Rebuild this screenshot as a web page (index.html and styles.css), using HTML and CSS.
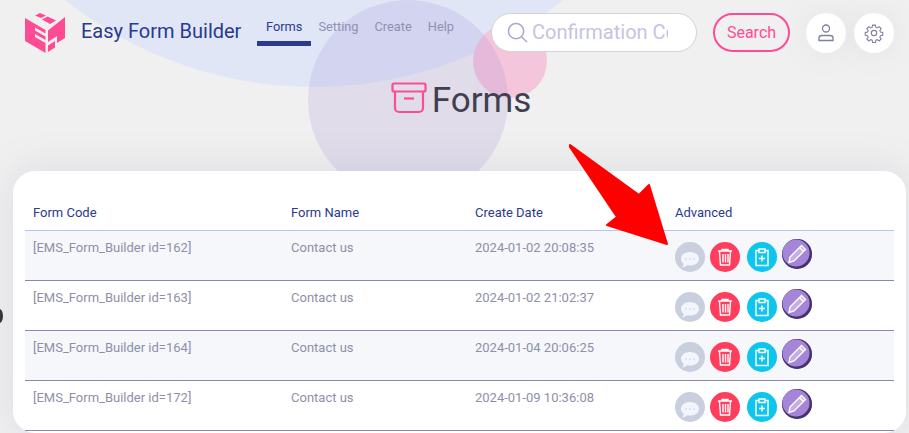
FILE: index.html
```html
<!DOCTYPE html>
<html lang="en">
<head>
  <meta charset="UTF-8" />
  <title>Easy Form Builder</title>
  <link rel="stylesheet" href="styles.css">
</head>
<body>
  <!-- Background blobs -->
  <div class="blob blob-blue"></div>
  <div class="blob blob-pink"></div>
  <div class="blob blob-purple"></div>
  <div class="blob blob-dot"></div>

  <header class="topbar">
    <svg class="logo" viewBox="0 0 42 42">
      <path d="M10 3.500 15 1 21 3.500 16 6Z M17 7.500 22.500 4.500 31 8.500 25 12Z" />
      <path d="M0 6 20.500 18V21.500L10 15.500V18.500L20.500 24.500V28L10 22V25L20.500 31V41L0 29Z" />
      <path d="M40 5V26L32 31V24L23 30V18.500Z" />
      <path d="M23 33.500 30 29V35.500L23 40Z" />
    </svg>
    <span class="brand">Easy Form Builder</span>
    <nav class="nav">
      <a class="nav-item active">Forms</a>
      <a class="nav-item">Setting</a>
      <a class="nav-item">Create</a>
      <a class="nav-item">Help</a>
    </nav>
    <div class="search-box">
      <svg class="search-icon" viewBox="0 0 22 22">
        <circle cx="9.500" cy="9.500" r="8" />
        <path d="M15 15.500 21 21" />
      </svg>
      <input class="search-input" placeholder="Confirmation Code">
    </div>
    <button class="search-btn">Search</button>
    <button class="round-btn">
      <svg viewBox="0 0 20 20">
        <circle cx="10" cy="5.500" r="3.500" />
        <path d="M3 17.500V15c0-1.500 1.500-2.500 3-2.500h8c1.500 0 3 1 3 2.500v2.500Z" />
      </svg>
    </button>
    <button class="round-btn gear">
      <svg viewBox="0 0 24 24">
        <circle cx="12" cy="12" r="3.200" />
        <path d="M10.300 2.500h3.400l.5 2.800 1.700.7 2.300-1.600 2.400 2.400-1.600 2.300.7 1.700 2.800.5v3.400l-2.800.5-.7 1.700 1.600 2.300-2.400 2.400-2.300-1.600-1.700.7-.5 2.800h-3.400l-.5-2.800-1.700-.7-2.300 1.600-2.400-2.400 1.600-2.300-.7-1.700-2.800-.5v-3.400l2.800-.5.7-1.700-1.600-2.300 2.400-2.400 2.300 1.600 1.700-.7Z" />
      </svg>
    </button>
  </header>

  <h1 class="page-title">
    <svg class="title-icon" viewBox="0 0 36 32">
      <rect x="1.500" y="1.500" width="33" height="8" rx="1.500" />
      <path d="M4 9.500V26a4 4 0 0 0 4 4h20a4 4 0 0 0 4-4V9.500" />
      <path d="M13 16.500h10" />
    </svg>
    <span>Forms</span>
  </h1>

  <main class="card">
    <table class="forms-table">
      <colgroup>
        <col class="col-code"><col class="col-name"><col class="col-date"><col>
      </colgroup>
      <thead>
        <tr><th>Form Code</th><th>Form Name</th><th>Create Date</th><th>Advanced</th></tr>
      </thead>
      <tbody>
        <tr class="odd">
          <td>[EMS_Form_Builder id=162]</td><td>Contact us</td><td>2024-01-02 20:08:35</td>
          <td>
            <div class="actions">
              <span class="act act-msg"><svg viewBox="0 0 30 30"><path class="fill" d="M15 10c5 0 9 2.800 9 6.800s-4 6.800-9 6.800c-1 0-2-.1-2.900-.3-1.300 1.300-3 2-5.100 2.200 1-1 1.600-2.300 1.700-3.800-1.700-1.200-2.700-3-2.700-4.900C6 12.800 10 10 15 10Z"/><g class="dots"><circle cx="11" cy="17" r=".8"/><circle cx="15" cy="17" r=".8"/><circle cx="19" cy="17" r=".8"/></g></svg></span>
              <span class="act act-del"><svg viewBox="0 0 30 30"><path d="M8 9h14M12 9V7.500h6V9M9.500 9.500l1 13.500h9l1-13.500M13 12v8.500M15.500 12v8.500M18 12v8.500"/></svg></span>
              <span class="act act-add"><svg viewBox="0 0 30 30"><path d="M12 8.500H9v15h12v-15h-3M12 7h6v3.500h-6ZM15 13.500v6M12 16.500h6"/></svg></span>
              <span class="act act-edit"><svg viewBox="0 0 30 30"><path class="fill" d="M19.500 6.500 23.500 10.500 12 22 7 23.500 8 18Z"/><path d="M17.500 8.500 21.500 12.500"/></svg></span>
            </div>
          </td>
        </tr>
        <tr>
          <td>[EMS_Form_Builder id=163]</td><td>Contact us</td><td>2024-01-02 21:02:37</td>
          <td>
            <div class="actions">
              <span class="act act-msg"><svg viewBox="0 0 30 30"><path class="fill" d="M15 10c5 0 9 2.800 9 6.800s-4 6.800-9 6.800c-1 0-2-.1-2.900-.3-1.300 1.300-3 2-5.100 2.200 1-1 1.600-2.300 1.700-3.800-1.700-1.200-2.700-3-2.700-4.900C6 12.800 10 10 15 10Z"/><g class="dots"><circle cx="11" cy="17" r=".8"/><circle cx="15" cy="17" r=".8"/><circle cx="19" cy="17" r=".8"/></g></svg></span>
              <span class="act act-del"><svg viewBox="0 0 30 30"><path d="M8 9h14M12 9V7.500h6V9M9.500 9.500l1 13.500h9l1-13.500M13 12v8.500M15.500 12v8.500M18 12v8.500"/></svg></span>
              <span class="act act-add"><svg viewBox="0 0 30 30"><path d="M12 8.500H9v15h12v-15h-3M12 7h6v3.500h-6ZM15 13.500v6M12 16.500h6"/></svg></span>
              <span class="act act-edit"><svg viewBox="0 0 30 30"><path class="fill" d="M19.500 6.500 23.500 10.500 12 22 7 23.500 8 18Z"/><path d="M17.500 8.500 21.500 12.500"/></svg></span>
            </div>
          </td>
        </tr>
        <tr class="odd">
          <td>[EMS_Form_Builder id=164]</td><td>Contact us</td><td>2024-01-04 20:06:25</td>
          <td>
            <div class="actions">
              <span class="act act-msg"><svg viewBox="0 0 30 30"><path class="fill" d="M15 10c5 0 9 2.800 9 6.800s-4 6.800-9 6.800c-1 0-2-.1-2.900-.3-1.300 1.300-3 2-5.100 2.200 1-1 1.600-2.300 1.700-3.800-1.700-1.200-2.700-3-2.700-4.900C6 12.800 10 10 15 10Z"/><g class="dots"><circle cx="11" cy="17" r=".8"/><circle cx="15" cy="17" r=".8"/><circle cx="19" cy="17" r=".8"/></g></svg></span>
              <span class="act act-del"><svg viewBox="0 0 30 30"><path d="M8 9h14M12 9V7.500h6V9M9.500 9.500l1 13.500h9l1-13.500M13 12v8.500M15.500 12v8.500M18 12v8.500"/></svg></span>
              <span class="act act-add"><svg viewBox="0 0 30 30"><path d="M12 8.500H9v15h12v-15h-3M12 7h6v3.500h-6ZM15 13.500v6M12 16.500h6"/></svg></span>
              <span class="act act-edit"><svg viewBox="0 0 30 30"><path class="fill" d="M19.500 6.500 23.500 10.500 12 22 7 23.500 8 18Z"/><path d="M17.500 8.500 21.500 12.500"/></svg></span>
            </div>
          </td>
        </tr>
        <tr>
          <td>[EMS_Form_Builder id=172]</td><td>Contact us</td><td>2024-01-09 10:36:08</td>
          <td>
            <div class="actions">
              <span class="act act-msg"><svg viewBox="0 0 30 30"><path class="fill" d="M15 10c5 0 9 2.800 9 6.800s-4 6.800-9 6.800c-1 0-2-.1-2.900-.3-1.300 1.300-3 2-5.100 2.200 1-1 1.600-2.300 1.700-3.800-1.700-1.200-2.700-3-2.700-4.900C6 12.800 10 10 15 10Z"/><g class="dots"><circle cx="11" cy="17" r=".8"/><circle cx="15" cy="17" r=".8"/><circle cx="19" cy="17" r=".8"/></g></svg></span>
              <span class="act act-del"><svg viewBox="0 0 30 30"><path d="M8 9h14M12 9V7.500h6V9M9.500 9.500l1 13.500h9l1-13.500M13 12v8.500M15.500 12v8.500M18 12v8.500"/></svg></span>
              <span class="act act-add"><svg viewBox="0 0 30 30"><path d="M12 8.500H9v15h12v-15h-3M12 7h6v3.500h-6ZM15 13.500v6M12 16.500h6"/></svg></span>
              <span class="act act-edit"><svg viewBox="0 0 30 30"><path class="fill" d="M19.500 6.500 23.500 10.500 12 22 7 23.500 8 18Z"/><path d="M17.500 8.500 21.500 12.500"/></svg></span>
            </div>
          </td>
        </tr>
      </tbody>
    </table>
  </main>

  <!-- Annotation arrow over the first row -->
  <svg class="arrow" viewBox="0 0 110 110">
    <path d="M2 3 71 53 81 43 99 102 39 83 49 75 2 5Z" />
  </svg>
</body>
</html>
```

FILE: styles.css
```css
*, *::before, *::after {
  box-sizing: border-box;
}

html, body {
  height: 100%;
}

body {
  margin: 0;
  padding-top: 13px;
  position: relative;
  overflow: hidden;
  background-color: #f0f0f0;
  font-family: 'Roboto', 'Liberation Sans', sans-serif;
  color: #2a3a8f;
}

/* Background blobs */
.blob {
  position: absolute;
  border-radius: 50%;
}

.blob-blue {
  left: -86px;
  top: -713px;
  width: 800px;
  height: 800px;
  background: #e0e6f6;
}

.blob-pink {
  left: 473px;
  top: 24px;
  width: 74px;
  height: 74px;
  background: #f4c6dc;
}

.blob-purple {
  left: 308px;
  top: 0;
  width: 200px;
  height: 200px;
  background: rgba(150, 125, 205, 0.17);
}

.blob-dot {
  left: -4px;
  top: 309px;
  width: 7px;
  height: 14px;
  background: #333;
}

/* Top bar */
.topbar {
  position: relative;
  display: flex;
  align-items: flex-start;
  height: 53px;
  padding-left: 25px;
}

.logo {
  width: 42px;
  height: 42px;
  margin-top: -1px;
  fill: #ff4b93;
}

.brand {
  margin: 7px 0 0 14px;
  width: 176px;
  font-size: 20px;
  line-height: 23px;
  color: #2a3a8f;
}

.nav {
  display: flex;
  width: 234px;
}

.nav-item {
  height: 33px;
  padding: 0 9px;
  font-size: 12.800px;
  line-height: 28px;
  color: #9090b2;
  margin-right: -2px;
}

.nav-item.active {
  color: #2a3a8f;
  border-bottom: 5px solid #2a3a8f;
}

.search-box {
  display: flex;
  align-items: center;
  gap: 4px;
  width: 206px;
  height: 39px;
  padding: 0 28px 0 15px;
  background: #fff;
  border: 1px solid #d2d2da;
  border-radius: 20px;
}

.search-icon {
  flex: none;
  width: 21px;
  height: 21px;
  fill: none;
  stroke: #a9a6d4;
  stroke-width: 1.600;
}

.search-input {
  flex: 1;
  min-width: 0;
  padding: 0 0 2px;
  border: 0;
  outline: none;
  background: transparent;
  font-family: inherit;
  font-size: 20px;
}

.search-input::placeholder {
  color: #c5c3e4;
  opacity: 1;
}

.search-btn {
  width: 77px;
  height: 39px;
  margin-left: 16px;
  background: transparent;
  border: 2px solid #ff4b93;
  border-radius: 20px;
  font-family: inherit;
  font-size: 16px;
  color: #ff4b93;
}

.round-btn {
  display: flex;
  align-items: center;
  justify-content: center;
  width: 40px;
  height: 40px;
  margin-left: 16px;
  padding: 0;
  background: #fff;
  border: 0;
  border-radius: 50%;
  box-shadow: 0 0 30px rgba(120, 130, 160, 0.1);
}

.round-btn + .round-btn {
  margin-left: 8px;
}

.round-btn svg {
  width: 20px;
  height: 20px;
  fill: none;
  stroke: #7f7f9f;
  stroke-width: 1.300;
}

/* Page heading */
.page-title {
  position: relative;
  display: flex;
  align-items: center;
  justify-content: center;
  gap: 5px;
  height: 42px;
  margin: 13px 0 0;
  padding-left: 13px;
  font-size: 35px;
  font-weight: 400;
  color: #3f3f50;
}

.title-icon {
  width: 36px;
  height: 32px;
  margin-top: -4px;
  fill: none;
  stroke: #ff4b93;
  stroke-width: 2.200;
}

/* Card and table */
.card {
  position: relative;
  width: 893px;
  height: 262px;
  margin: 50px 0 0 13px;
  padding: 29px 12px 0;
  background: #fff;
  border-radius: 22px;
  box-shadow: 0 0 40px rgba(120, 130, 160, 0.18);
}

.forms-table {
  width: 869px;
  border-collapse: collapse;
  table-layout: fixed;
  font-size: 13px;
}

.col-code { width: 258px; }
.col-name { width: 184px; }
.col-date { width: 200px; }

.forms-table th {
  height: 30px;
  padding: 0 8px 4px;
  text-align: left;
  font-weight: 400;
  color: #2a3a8f;
  border-bottom: 1px solid #b8c4f0;
}

.forms-table td {
  height: 50px;
  padding: 9px 8px 0;
  vertical-align: top;
  color: #8f8fa8;
  line-height: 16px;
  border-bottom: 1px solid #8a88ad;
}

.forms-table .odd td {
  background: #f5f7fb;
}

/* Row action buttons */
.actions {
  display: flex;
  align-items: flex-start;
  height: 30px;
}

.act {
  width: 30px;
  height: 30px;
  margin-top: 2px;
  border-radius: 50%;
}

.act svg {
  display: block;
  width: 30px;
  height: 30px;
  fill: none;
  stroke: #fff;
  stroke-width: 1.400;
}

.act .fill {
  fill: #fff;
  stroke: none;
}

.act-msg {
  background: #c9cfde;
}

.act-msg .fill {
  fill: #f2f5fb;
}

.act-msg .dots {
  fill: #c9cfde;
  stroke: none;
}

.act-del {
  margin-left: 5px;
  background: #ff3e5e;
}

.act-add {
  margin-left: 7px;
  background: #0fc5ee;
}

.act-edit {
  margin: -1px 0 0 5px;
  background: #a585d8;
  box-shadow: inset -1px -1px 0 1.500px #46336e;
}

.act-edit .fill {
  fill: #c4aeea;
  stroke: #fff;
  stroke-width: 1.400;
}

/* Annotation */
.arrow {
  position: absolute;
  left: 568px;
  top: 142px;
  width: 110px;
  height: 110px;
  fill: #f00;
  stroke: #f00;
  stroke-width: 2;
  stroke-linejoin: round;
}
```
